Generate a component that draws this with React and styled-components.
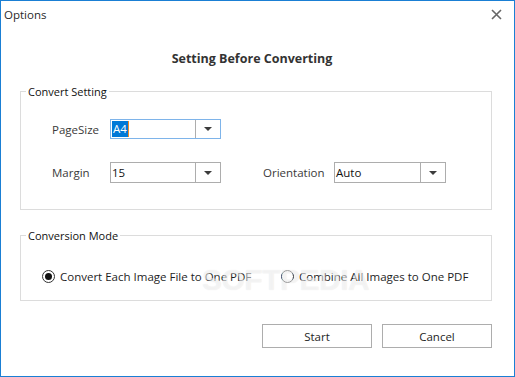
import React from "react";
import styled, { createGlobalStyle } from "styled-components";

const GlobalStyle = createGlobalStyle`
  html, body {
    margin: 0;
    padding: 0;
    background: #ffffff;
  }
  * {
    box-sizing: border-box;
  }
`;

const Window = styled.div`
  position: relative;
  width: 515px;
  height: 377px;
  border: 1px solid #1a7fd4;
  background: #ffffff;
  font-family: "Open Sans", "Liberation Sans", sans-serif;
  font-size: 11px;
  color: #1e1e1e;
  display: flex;
  flex-direction: column;
`;

const TitleBar = styled.div`
  height: 26px;
  display: flex;
  align-items: center;
  justify-content: space-between;
  padding: 0 12px 0 3px;
`;

const Title = styled.span`
  font-size: 11.5px;
  color: #2a2a2a;
`;

const CloseBox = styled.div`
  width: 12px;
  height: 12px;
  display: flex;
  align-items: center;
  justify-content: center;
`;

const Heading = styled.h1`
  margin: 23px 0 0;
  padding-right: 11px;
  font-size: 12.5px;
  line-height: 18px;
  font-weight: 700;
  text-align: center;
  color: #333333;
`;

const Group = styled.fieldset`
  position: relative;
  margin: ${(p) => p.$top}px 22px 0 19px;
  padding: 0;
  border: 1px solid #dcdcdc;
  min-width: 0;
`;

const Legend = styled.legend`
  margin-left: 5px;
  padding: 0 2px;
  font-size: 11px;
  line-height: 15px;
  color: #111111;
`;

const SettingGrid = styled.div`
  display: grid;
  grid-template-columns: 58px 111px 42px 71px 112px;
  grid-template-rows: 20px 21px;
  row-gap: 23px;
  align-items: center;
  padding: 20px 0 26px 31px;
`;

const Label = styled.span`
  grid-column: ${(p) => p.$col};
  font-size: 11.5px;
  color: #3a3a3a;
`;

const Combo = styled.div`
  grid-column: ${(p) => p.$col};
  height: 100%;
  display: flex;
  border: 1px solid ${(p) => (p.$focused ? "#7eb4ea" : "#adadad")};
  background: #ffffff;
`;

const ComboText = styled.div`
  flex: 1;
  display: flex;
  align-items: center;
  padding-left: 1px;
  font-size: 11.5px;
  color: #111111;
`;

const Selected = styled.span`
  background: #0078d7;
  color: #ffffff;
  padding: 0 1px;
  line-height: 16px;
`;

const Caret = styled.span`
  width: 1px;
  height: 16px;
  background: #f08a24;
`;

const ComboButton = styled.div`
  width: 25px;
  border-left: 1px solid #adadad;
  display: flex;
  align-items: center;
  justify-content: center;

  &::after {
    content: "";
    border-left: 4px solid transparent;
    border-right: 4px solid transparent;
    border-top: 4px solid #3c3c3c;
  }
`;

const RadioRow = styled.div`
  display: grid;
  grid-template-columns: 239px auto;
  align-items: center;
  padding: 26px 0 16px 21px;
`;

const Radio = styled.label`
  display: flex;
  align-items: center;
  gap: 5px;
  font-size: 11.5px;
  color: #1e1e1e;
`;

const RadioCircle = styled.span`
  width: 13px;
  height: 13px;
  border-radius: 50%;
  border: 1px solid #333333;
  background: #ffffff;
  display: flex;
  align-items: center;
  justify-content: center;

  &::after {
    content: "";
    width: 7px;
    height: 7px;
    border-radius: 50%;
    background: ${(p) => (p.$checked ? "#111111" : "transparent")};
  }
`;

const Watermark = styled.span`
  position: absolute;
  left: 181px;
  top: 20px;
  font-family: "Liberation Sans", sans-serif;
  font-size: 30px;
  font-weight: 700;
  letter-spacing: -0.5px;
  color: rgba(255, 255, 255, 0.55);
  text-shadow: 0 0 1px rgba(0, 0, 0, 0.1);
  pointer-events: none;
`;

const ButtonBar = styled.div`
  display: flex;
  justify-content: flex-end;
  gap: 10px;
  margin-top: 23px;
  padding-right: 22px;
`;

const Button = styled.button`
  width: 110px;
  height: 24px;
  border: 1px solid #adadad;
  background: #ffffff;
  font-family: inherit;
  font-size: 11.5px;
  color: #1e1e1e;
  padding: 0;
`;

export default function App() {
  return (
    <>
      <GlobalStyle />
      <Window>
        <TitleBar>
          <Title>Options</Title>
          <CloseBox>
            <svg width="11" height="11" viewBox="0 0 11 11">
              <path d="M1 1 L10 10 M10 1 L1 10" stroke="#666666" strokeWidth="1.6" />
            </svg>
          </CloseBox>
        </TitleBar>

        <Heading>Setting Before Converting</Heading>

        <Group $top={16}>
          <Legend>Convert Setting</Legend>
          <SettingGrid>
            <Label $col={1}>PageSize</Label>
            <Combo $col={2} $focused>
              <ComboText>
                <Selected>A4</Selected>
                <Caret />
              </ComboText>
              <ComboButton />
            </Combo>

            <Label $col={1}>Margin</Label>
            <Combo $col={2}>
              <ComboText>15</ComboText>
              <ComboButton />
            </Combo>
            <Label $col={4}>Orientation</Label>
            <Combo $col={5}>
              <ComboText>Auto</ComboText>
              <ComboButton />
            </Combo>
          </SettingGrid>
        </Group>

        <Group $top={18}>
          <Legend>Conversion Mode</Legend>
          <RadioRow>
            <Radio>
              <RadioCircle $checked />
              Convert Each Image File to One PDF
            </Radio>
            <Radio>
              <RadioCircle />
              Combine All Images to One PDF
            </Radio>
          </RadioRow>
          <Watermark aria-hidden="true">SOFTPEDIA</Watermark>
        </Group>

        <ButtonBar>
          <Button>Start</Button>
          <Button>Cancel</Button>
        </ButtonBar>
      </Window>
    </>
  );
}
